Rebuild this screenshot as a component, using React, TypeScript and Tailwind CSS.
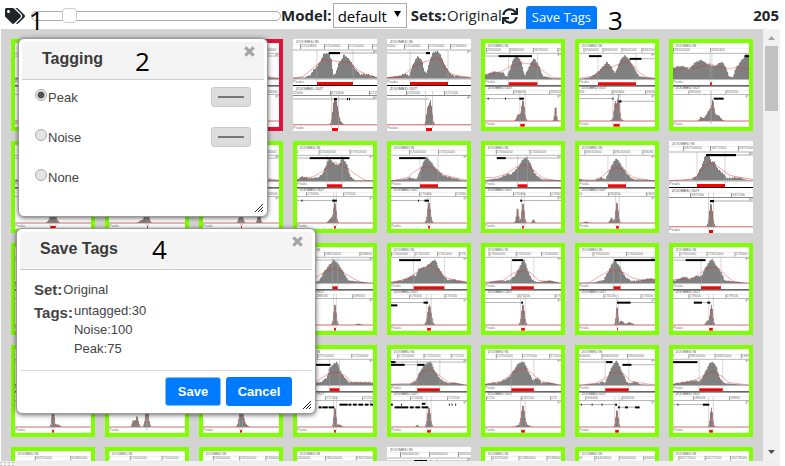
import React from "react";
import { FaSync, FaTags } from "react-icons/fa";

type Pt = [number, number];
type Box = [number, number, number];

interface Plot {
  border?: "none" | "red";
  area: Pt[];
  fit: Pt[];
  bar: Pt;
  genes?: Box[];
  lines?: Box[];
  peaks: Box[];
  bar2: Pt;
  marks: [number, string][];
  marks2: [number, string][];
}

const base: Plot = {
  area: [[0, 1], [20, 3], [30, 10], [38, 24], [43, 27], [50, 17], [58, 4], [70, 2], [84, 1]],
  fit: [[0, 1], [22, 5], [34, 14], [42, 17], [52, 13], [64, 4], [84, 1]],
  bar: [34, 50],
  genes: [],
  lines: [[0, 84, 14]],
  peaks: [[42, 24, 1.6]],
  bar2: [41, 43],
  marks: [[24, "170370000"], [60, "170380000"]],
  marks2: [[28, "170350k"], [66, "170400k"]],
};

const plots: Plot[] = [
  base,
  base,
  { ...base, border: "red" },
  {
    ...base,
    border: "none",
    area: [[0, 1], [12, 1], [17, 4], [22, 11], [25, 14], [29, 21], [31, 26], [36, 26], [39, 18], [40, 3], [43, 7], [46, 17], [49, 20], [51, 25], [55, 21], [58, 18], [61, 12], [67, 5], [74, 5], [84, 1]],
    fit: [[0, 0], [10, 2], [22, 12], [30, 19], [37, 18], [55, 16], [60, 13], [67, 7], [74, 4], [84, 1]],
    bar: [24, 60],
    genes: [[36, 47, 14], [41, 44, 60], [54, 55, 60], [56, 57, 60]],
    lines: [[47, 84, 14], [0, 84, 60]],
    peaks: [[41, 20, 1.5], [43.5, 17, 1.6], [46, 5, 2]],
    bar2: [39, 45],
    marks: [[7, "2210800"], [31, "2210900"], [55, "2211000"], [79, "2212"]],
    marks2: [[-2, "2200k"], [37, "22100k"], [76, "2220k"]],
  },
  {
    ...base,
    border: "none",
    area: [[0, 1], [13, 3], [18, 6], [22, 3], [25, 12], [28, 19], [31, 23], [35, 19], [37, 9], [40, 6], [42, 17], [45, 24], [46, 27], [50, 28], [53, 26], [56, 18], [61, 9], [65, 4], [73, 2], [84, 1]],
    fit: [[0, 1], [16, 2], [25, 11], [36, 16], [42, 18], [49, 21], [55, 17], [60, 8], [65, 4], [84, 1]],
    bar: [23, 61],
    genes: [[39, 43, 14]],
    lines: [[0, 40, 14], [0, 42, 60]],
    peaks: [[40.5, 14, 1.2], [43.5, 24, 1.5]],
    bar2: [39, 45],
    marks: [[-8, "2200000"], [17, "2210000"], [41, "2220000"], [63, "2230000"]],
    marks2: [[19, "22050k"], [57, "22150k"]],
  },
  {
    ...base,
    area: [[0, 5], [9, 9], [20, 8], [24, 3], [28, 13], [32, 24], [36, 27], [40, 20], [44, 4], [47, 11], [52, 21], [54, 24], [59, 17], [64, 4], [74, 1], [84, 1]],
    fit: [[0, 5], [18, 8], [29, 15], [40, 18], [55, 16], [63, 10], [74, 2], [84, 1]],
    bar: [26, 58],
    genes: [[15, 52, 14], [3, 4, 61], [22, 23, 61], [38, 43, 61]],
    lines: [[0, 15, 14], [0, 43, 61]],
    peaks: [[42, 24, 1.6], [37, 8, 1.6], [78, 17, 1]],
    bar2: [39, 44],
    marks: [[1, "2650000"], [27, "2660000"], [53, "2670000"], [80, "26"]],
    marks2: [[31, "26600k"], [71, "26650k"]],
  },
  {
    ...base,
    area: [[0, 0], [12, 2], [20, 8], [25, 13], [31, 20], [36, 14], [40, 7], [43, 15], [47, 24], [51, 27], [56, 22], [61, 13], [67, 3], [84, 1]],
    fit: [[0, 1], [18, 4], [25, 11], [31, 14], [36, 13], [45, 17], [53, 19], [60, 15], [67, 7], [75, 2], [84, 1]],
    bar: [21, 63],
    genes: [[11, 25, 14], [56, 69, 17], [37, 38, 61], [44, 47, 64]],
    lines: [[69, 84, 17], [0, 38, 61], [47, 84, 64]],
    peaks: [[40, 17, 1.2], [43.5, 24, 1.2], [42, 6, 3]],
    bar2: [38, 45],
    marks: [[5, "3340000"], [26, "3340500"], [47, "3341000"], [69, "3341500"]],
    marks2: [[-6, "3335k"], [36, "33400k"], [73, "3345k"]],
  },
  {
    ...base,
    area: [[0, 13], [5, 15], [11, 15], [18, 12], [24, 19], [31, 22], [39, 17], [46, 15], [54, 20], [58, 15], [62, 3], [66, 2], [69, 12], [76, 22], [81, 27], [84, 25]],
    fit: [[0, 9], [15, 13], [25, 12], [40, 17], [50, 14], [60, 11], [70, 13], [80, 11], [84, 12]],
    bar: [41, 43],
    genes: [[79, 84, 14], [45, 56, 61]],
    lines: [],
    peaks: [[42, 14, 4.5], [44, 12, 1], [31, 4, 1.5], [51, 4, 2]],
    bar2: [42, 42],
    marks: [[0, "33502000"], [41, "3350300"]],
    marks2: [[17, "33500k"], [58, "33550k"]],
  },
  { ...base, peaks: [[42, 20, 2.5]], bar2: [39, 45] },
  { ...base, peaks: [[42, 22, 1.6], [38, 4, 3]], bar2: [42, 43] },
  { ...base, peaks: [[42, 22, 1.5], [62, 16, 1.2]], bar2: [42, 43] },
  {
    ...base,
    area: [[0, 2], [5, 6], [14, 4], [24, 5], [29, 10], [33, 21], [36, 27], [40, 21], [46, 18], [50, 27], [55, 20], [59, 6], [64, 1], [84, 1]],
    fit: [[0, 1], [18, 5], [30, 12], [42, 21], [53, 16], [64, 8], [75, 1], [84, 0]],
    bar: [33, 50],
    genes: [[14, 58, 14], [5, 6, 61], [39, 44, 61]],
    lines: [[0, 14, 14], [0, 44, 61]],
    peaks: [[42, 23, 1.4], [38, 6, 2.2]],
    marks: [[-6, "000"], [24, "17000000"], [58, "17050000"]],
    marks2: [[10, "17000k"], [51, "17050k"]],
  },
  {
    ...base,
    area: [[0, 1], [14, 2], [21, 5], [28, 2], [32, 12], [36, 22], [39, 28], [45, 21], [50, 14], [58, 7], [69, 4], [78, 1], [84, 1]],
    fit: [[0, 0], [18, 4], [25, 10], [34, 15], [43, 16], [52, 12], [58, 7], [70, 4], [84, 1]],
    bar: [32, 52],
    genes: [[9, 38, 14], [30, 31, 61], [37, 42, 61]],
    lines: [[0, 42, 61]],
    marks: [[20, "17040000"], [52, "17050000"]],
    marks2: [[31, "17040k"], [71, "17060"]],
  },
  {
    ...base,
    area: [[0, 1], [13, 3], [26, 9], [29, 8], [37, 17], [42, 25], [46, 27], [50, 21], [55, 9], [63, 2], [84, 1]],
    fit: [[0, 4], [10, 4], [24, 8], [35, 16], [44, 18], [53, 13], [63, 4], [75, 1], [84, 0]],
    bar: [36, 47],
    genes: [[13, 23, 14], [39, 41, 61]],
    lines: [[23, 84, 14], [39, 84, 61]],
    peaks: [[36, 17, 1.2], [42, 23, 1.4], [53.5, 4, 1]],
    marks: [[12, "17040000"], [49, "17060000"]],
    marks2: [[31, "17040k"], [72, "17060"]],
  },
  {
    ...base,
    area: [[0, 3], [4, 1], [18, 1], [24, 5], [29, 2], [34, 13], [38, 22], [42, 26], [47, 18], [53, 9], [60, 2], [84, 1]],
    fit: [[0, 2], [15, 1], [24, 4], [32, 11], [42, 15], [51, 12], [60, 4], [84, 0]],
    bar: [32, 52],
    lines: [],
    peaks: [[36, 6, 1.5], [42, 24, 1.4], [8, 1, 2]],
    bar2: [41, 44],
    marks: [[6, "18010000"], [38, "18020000"], [70, "18030"]],
    marks2: [[-6, "800k"], [32, "18020k"], [74, "1803"]],
  },
  {
    ...base,
    border: "none",
    area: [[0, 0], [23, 1], [28, 6], [33, 16], [36, 25], [39, 27], [43, 19], [45, 20], [49, 12], [54, 8], [58, 3], [68, 4], [76, 1], [84, 0]],
    fit: [[0, 0], [20, 1], [28, 4], [36, 15], [43, 18], [53, 11], [61, 5], [84, 1]],
    bar: [28, 56],
    genes: [[37, 67, 14], [41, 45, 60]],
    lines: [[67, 84, 14], [45, 84, 60]],
    peaks: [[42, 24, 1.6]],
    bar2: [40, 44],
    marks: [[14, "18710000"], [41, "1871500"], [69, "1872000"]],
    marks2: [[21, "18700k"], [62, "18720k"]],
  },
  base,
  base,
  base,
  {
    ...base,
    area: [[0, 1], [24, 2], [29, 12], [35, 20], [41, 27], [47, 20], [53, 10], [57, 3], [84, 0]],
    fit: [[0, 0], [12, 2], [22, 7], [33, 14], [42, 16], [51, 12], [62, 5], [71, 1], [84, 0]],
    bar: [39, 45],
    peaks: [[42, 24, 1.4], [68, 1, 2]],
    marks: [[30, "18870000"], [69, "188800"]],
    marks2: [[20, "18850k"], [61, "18900k"]],
  },
  {
    ...base,
    area: [[0, 1], [10, 3], [19, 7], [25, 10], [27, 8], [31, 17], [39, 19], [43, 23], [49, 27], [52, 19], [58, 9], [63, 4], [69, 5], [84, 1]],
    fit: [[0, 1], [20, 5], [32, 15], [43, 20], [52, 13], [61, 6], [75, 2], [84, 1]],
    bar: [25, 59],
    genes: [[9, 33, 14], [36, 41, 61], [0, 7, 64]],
    lines: [[0, 40, 61]],
    peaks: [[42.5, 23, 2]],
    bar2: [40, 44],
    marks: [[0, "17600000"], [26, "1760500"], [51, "1761000"], [75, "176"]],
    marks2: [[20, "17600k"], [59, "17650k"]],
  },
  {
    ...base,
    area: [[0, 0], [9, 2], [27, 4], [33, 9], [39, 20], [43, 28], [47, 16], [51, 6], [57, 1], [72, 3], [84, 0]],
    fit: [[0, 1], [20, 3], [31, 11], [44, 14], [50, 12], [59, 3], [84, 0]],
    bar: [29, 54],
    genes: [[30, 42, 14], [40, 42, 61]],
    lines: [[0, 42, 61]],
    bar2: [40, 44],
    marks: [[4, "17600000"], [34, "1762000"], [62, "17630000"]],
    marks2: [[36, "17620k"], [77, "176"]],
  },
  {
    ...base,
    area: [[0, 0], [18, 1], [27, 4], [32, 13], [37, 23], [40, 26], [45, 19], [51, 8], [58, 3], [67, 4], [78, 6], [84, 5]],
    fit: [[0, 0], [12, 1], [23, 8], [32, 13], [42, 14], [51, 11], [58, 6], [70, 3], [84, 4]],
    bar: [38, 46],
    genes: [[39, 84, 14], [42, 57, 61]],
    lines: [[57, 84, 61]],
    peaks: [[42, 22, 1], [47, 5, 2], [56, 3, 2.5]],
    bar2: [42, 43],
    marks: [[15, "17600000"], [52, "17640000"]],
    marks2: [[27, "17620k"], [68, "17650k"]],
  },
  {
    ...base,
    area: [[0, 3], [13, 8], [19, 5], [26, 9], [31, 8], [37, 20], [43, 28], [48, 20], [54, 12], [57, 3], [67, 2], [84, 0]],
    fit: [[0, 4], [15, 4], [26, 7], [35, 15], [43, 18], [52, 15], [59, 8], [68, 1], [84, 0]],
    bar: [31, 53],
    genes: [[14, 36, 14], [23, 32, 61], [38, 41, 61]],
    lines: [[0, 14, 14], [23, 42, 61]],
    peaks: [[42.5, 23, 1.4], [38, 5, 1.5]],
    bar2: [40, 44],
    marks: [[7, "17810000"], [37, "17820000"], [68, "178300"]],
    marks2: [[17, "17800k"], [58, "17850k"]],
  },
  { ...base, peaks: [[42, 22, 1.2], [47, 3, 2]], bar2: [41, 43] },
  { ...base, peaks: [[27, 8, 1.2], [31, 12, 1.5], [42, 23, 1.6]], bar2: [42, 42] },
  { ...base, peaks: [[42, 23, 1.8], [45, 6, 2.5]], bar2: [41, 43] },
  {
    ...base,
    area: [[0, 2], [25, 3], [33, 9], [36, 20], [44, 27], [49, 14], [57, 4], [66, 4], [80, 4], [84, 3]],
    fit: [[0, 1], [20, 3], [29, 9], [36, 13], [46, 14], [55, 9], [60, 3], [84, 2]],
    bar: [36, 47],
    genes: [[0, 37, 17], [24, 27, 64], [28, 34, 64], [35, 41, 64], [47, 56, 61], [57, 60, 61], [62, 66, 61], [68, 73, 61], [75, 79, 61], [81, 84, 61]],
    lines: [[24, 42, 64], [47, 84, 61]],
    peaks: [[42, 23, 1.2], [47, 3, 1.5]],
    marks: [[22, "17210000"], [60, "17220000"]],
    marks2: [[31, "17210k"], [72, "17250"]],
  },
  {
    ...base,
    area: [[0, 1], [21, 1], [28, 6], [32, 16], [38, 24], [44, 27], [48, 17], [54, 8], [63, 2], [69, 3], [84, 0]],
    fit: [[0, 1], [22, 2], [30, 8], [36, 15], [43, 18], [52, 12], [63, 3], [84, 0]],
    bar: [29, 54],
    genes: [[0, 5, 14], [0, 15, 17], [29, 37, 17], [0, 2, 61], [11, 12, 61], [34, 38, 60], [64, 65, 61], [67, 68, 61], [71, 72, 61], [4, 19, 64], [21, 25, 64], [27, 32, 64], [34, 41, 64]],
    lines: [[0, 84, 14], [0, 38, 17], [4, 42, 64]],
    peaks: [[42, 23, 1.6], [29, 2, 1]],
    bar2: [40, 44],
    marks: [[7, "17220000"], [36, "17220500"], [66, "172210"]],
    marks2: [[21, "17200k"], [62, "17250k"]],
  },
  {
    ...base,
    area: [[0, 1], [16, 4], [26, 9], [31, 16], [37, 25], [43, 27], [48, 16], [53, 6], [58, 9], [63, 3], [71, 3], [84, 0]],
    fit: [[0, 1], [18, 4], [31, 14], [42, 19], [48, 17], [55, 10], [63, 4], [84, 0]],
    bar: [29, 54],
    lines: [],
    peaks: [[42, 20, 1.6], [42, 5, 4]],
    bar2: [40, 44],
    marks: [[12, "17210000"], [41, "1721500"], [71, "172200"]],
    marks2: [[1, "171k"], [40, "17210k"], [72, "172"]],
  },
  {
    ...base,
    area: [[0, 0], [20, 2], [26, 5], [29, 3], [34, 16], [38, 24], [42, 28], [47, 17], [53, 4], [57, 2], [62, 5], [67, 1], [84, 0]],
    fit: [[0, 0], [18, 2], [29, 8], [37, 14], [43, 15], [51, 11], [58, 4], [84, 0]],
    bar: [29, 55],
    genes: [[30, 37, 14], [48, 58, 17], [2, 3, 61], [14, 15, 61], [25, 26, 61], [40, 42, 61], [43, 45, 64], [51, 54, 64], [62, 67, 64]],
    lines: [[0, 37, 14], [58, 84, 17], [0, 42, 61], [43, 67, 64]],
    peaks: [[42, 20, 1.3]],
    bar2: [40, 44],
    marks: [[-4, "8400000"], [25, "18450000"], [53, "18500000"]],
    marks2: [[7, "18440k"], [47, "18450k"]],
  },
  {
    ...base,
    area: [[0, 1], [10, 4], [24, 6], [30, 5], [35, 14], [40, 24], [43, 27], [48, 22], [51, 10], [57, 2], [84, 0]],
    fit: [[0, 1], [15, 3], [30, 8], [43, 15], [54, 10], [61, 3], [84, 0]],
    bar: [29, 55],
    genes: [[0, 27, 14], [5, 6, 61], [33, 40, 61]],
    lines: [[0, 40, 61]],
    peaks: [[42.5, 22, 1.3]],
    bar2: [40, 44],
    marks: [[-4, "00"], [17, "18810000"], [46, "18820000"], [75, "1883"]],
    marks2: [[22, "18820k"], [62, "18850"]],
  },
  { ...base, marks: [[22, "16370000"], [61, "16380000"]] },
  { ...base, marks: [[-6, "000"], [23, "17010000"], [58, "17020000"]] },
  { ...base, marks: [[11, "13540000"], [40, "13550000"], [69, "13560000"]] },
  { ...base, marks: [[-2, "1560000"], [31, "18020000"], [65, "18070000"]] },
  { ...base, border: "none", marks: [[13, "18430000"], [42, "18440000"], [71, "1845000"]], genes: [[27, 40, 14]] },
  { ...base, marks: [[7, "15370000"], [37, "15380000"], [68, "15390000"]] },
  { ...base, marks: [[-4, "000"], [17, "16404000"], [44, "16404500"], [71, "164050"]] },
  { ...base, marks: [[6, "16277000"], [35, "16277500"], [63, "16278000"]] },
];

function heightAt(points: Pt[], x: number) {
  for (let i = 1; i < points.length; i++) {
    const [x0, y0] = points[i - 1];
    const [x1, y1] = points[i];
    if (x <= x1) return y0 + ((y1 - y0) * (x - x0)) / (x1 - x0);
  }
  return points[points.length - 1][1];
}

function zoomedOut(peaks: Box[], x: number) {
  return peaks.reduce((h, [c, top, w]) => h + top * Math.exp(-((x - c) ** 2) / (2 * w * w)), 0.5);
}

function steps(height: (x: number) => number, floor: number, rough: number) {
  let d = `M0 ${floor}`;
  for (let x = 0; x < 84; x++) {
    const h = height(x + 0.5);
    const jitter = h > 3 ? ((x * 7) % 5) * rough : 0;
    const y = (floor - Math.max(0.5, h - jitter)).toFixed(1);
    d += `L${x} ${y}L${x + 1} ${y}`;
  }
  return `${d}L84 ${floor}Z`;
}

function trace(height: (x: number) => number, floor: number) {
  let d = "";
  for (let x = 0; x <= 84; x++) d += `${x ? "L" : "M"}${x} ${(floor - height(x)).toFixed(1)}`;
  return d;
}

function Thumbnail({ plot }: { plot: Plot }) {
  const plain = plot.border === "none";
  const upper = (x: number) => heightAt(plot.area, x);
  const lower = (x: number) => zoomedOut(plot.peaks, x);
  const [b0, b1] = plot.bar;
  const [c0, c1] = plot.bar2;
  return (
    <svg viewBox="0 0 84 92" className="block h-full w-full" fontFamily="'Liberation Sans', Arial, sans-serif" fontSize="4" fill="#777">
      <rect width="84" height="92" fill="#fff" />
      <text x="3" y="4" fill="#555">ZOOMED IN</text>
      <text x="3" y="50.8" fill="#333">ZOOMED OUT</text>
      <path d="M0 5.5H84M0 52H84" stroke="#ddd" strokeWidth=".5" />
      {plot.marks.map(([x, label], i) => (
        <g key={i}>
          <path d={`M${x + 0.5} 5V10`} stroke="#777" strokeWidth=".8" />
          <text x={x + 1} y="8.2">{label}</text>
        </g>
      ))}
      {plot.marks2.map(([x, label], i) => (
        <g key={i}>
          <path d={`M${x + 0.5} 52V56`} stroke="#777" strokeWidth=".8" />
          <text x={x + 1} y="55">{label}</text>
        </g>
      ))}
      <path d="M0 11H84" stroke="#aaa" strokeWidth=".9" />
      <path d="M0 56.5H84" stroke={plain ? "#777" : "#aaa"} strokeWidth=".9" />
      <path d="M80 12H84M81 12V14M80 58H84M81 58V60" stroke="#888" strokeWidth=".7" />
      <path d={steps(upper, 39.5, 0.35)} fill="#808080" />
      <path d={steps(lower, 86, 0.25)} fill="#808080" />
      <path d={`M${b0} 11V43M${b1} 11V43M${c0 - 0.5} 52V89M${c1 + 0.5} 52V89`} stroke="#aaa" strokeOpacity=".7" strokeWidth=".7" />
      {plot.lines?.map(([a, b, y], i) => (
        <path key={i} d={`M${a} ${y}H${b}`} stroke="#888" strokeWidth=".7" />
      ))}
      {plot.genes?.map(([a, b, y], i) => (
        <rect key={i} x={a} y={y - 1} width={b - a} height="2.2" fill="#000" />
      ))}
      <path d={trace((x) => heightAt(plot.fit, x), 39.5)} fill="none" stroke="#f02020" strokeOpacity=".75" strokeWidth=".6" />
      <path d={trace((x) => lower(x) * 0.8, 86)} fill="none" stroke="#f02020" strokeOpacity=".5" strokeWidth=".6" />
      <path d="M0 40H84" stroke="#999" strokeWidth=".8" />
      <path d="M0 86.3H84" stroke="#f09090" strokeWidth=".5" />
      <text x="0" y="43.7">Peaks</text>
      <text x="0" y="90">Peaks</text>
      <rect x="0" y="46" width="84" height={plain ? 1 : 1.8} fill={plain ? "#000" : "#666"} />
      <rect x={b0} y="43" width={b1 - b0} height="3" fill="#f00" />
      <rect x={c0} y="89" width={c1 - c0} height="3" fill="#f00" />
    </svg>
  );
}

function Grip() {
  return (
    <svg viewBox="0 0 8 8" className="absolute right-1 bottom-1 size-2" stroke="#222" strokeWidth="1">
      <path d="M0 8L8 0M3 8L8 3M6 8L8 6" />
    </svg>
  );
}

function Dialog({ title, className, children }: { title: string; className: string; children: React.ReactNode }) {
  return (
    <section
      role="dialog"
      aria-label={title}
      className={`absolute rounded-md border border-[#999] bg-white p-[3px] font-['Liberation_Sans',Arial,sans-serif] text-[13px] leading-[19px] text-[#444] shadow-[0_1px_5px_rgba(0,0,0,0.6)] ${className}`}
    >
      <header className="flex h-[38px] items-start justify-between rounded-t border-b border-[#ccc] bg-[#f4f4f4] pl-5">
        <h2 className="pt-[7px] text-[16px] font-bold text-[#3a3a3a]">{title}</h2>
        <button type="button" aria-label="Close" className="p-[9px] pt-1">
          <svg viewBox="0 0 11 11" className="size-[11px]" stroke="#a5a5a5" strokeWidth="3.2">
            <path d="M1.3 1.3L9.7 9.7M9.7 1.3L1.3 9.7" />
          </svg>
        </button>
      </header>
      {children}
      <Grip />
    </section>
  );
}

function Note({ children, className }: { children: string; className: string }) {
  return <span className={`pointer-events-none absolute text-[26px] leading-[26px] text-black ${className}`}>{children}</span>;
}

const tags = [
  { name: "Peak", swatch: true },
  { name: "Noise", swatch: true },
  { name: "None", swatch: false },
];

export default function App() {
  return (
    <div className="relative flex h-screen flex-col overflow-hidden bg-white font-['Open_Sans','Noto_Sans',sans-serif] text-[15px] text-[#212529]">
      <header className="flex h-[29px] shrink-0 items-center pt-[2px] pl-[5px]">
        <FaTags size={20} aria-hidden="true" />
        <input
          type="range"
          aria-label="Image size"
          defaultValue={13}
          className="ml-[6px] h-[10px] w-[250px] appearance-none rounded-full border border-[#aaa] bg-white [&::-webkit-slider-thumb]:size-[15px] [&::-webkit-slider-thumb]:appearance-none [&::-webkit-slider-thumb]:rounded [&::-webkit-slider-thumb]:border [&::-webkit-slider-thumb]:border-[#ccc] [&::-webkit-slider-thumb]:bg-white"
        />
        <label htmlFor="model" className="pr-px font-bold">Model:</label>
        <span className="relative">
          <select id="model" className="block h-[25px] w-[74px] appearance-none border border-[#a9a9a9] bg-white pl-1 leading-[22px] text-black">
            <option>default</option>
          </select>
          <svg viewBox="0 0 7 6" className="pointer-events-none absolute top-2 right-[6px] h-[6px] w-[7px]">
            <path d="M0 0H7L3.5 6Z" />
          </svg>
        </span>
        <span className="ml-1 pr-px font-bold">Sets:</span>
        <span>Original</span>
        <button type="button" aria-label="Refresh">
          <FaSync size={16} />
        </button>
        <button type="button" className="ml-2 h-[23px] self-end rounded-t-[3px] bg-[#007bff] px-[6px] text-[13px] leading-[23px] text-white">
          Save Tags
        </button>
        <span className="mr-[6px] ml-auto font-bold">205</span>
      </header>

      <main className="flex min-h-0 flex-1 pr-[5px] pl-px">
        <div className="flex min-w-0 flex-1 flex-wrap content-start gap-[10px] overflow-hidden bg-[#d3d3d3] pt-[10px] pl-[10px]">
          {plots.map((plot, i) => (
            <div
              key={i}
              className={`h-[92px] w-[84px] ${
                plot.border === "none" ? "" : plot.border === "red" ? "border-4 border-[#dc143c]" : "border-4 border-[#80ff00]"
              }`}
            >
              <Thumbnail plot={plot} />
            </div>
          ))}
        </div>
        <div className="flex w-[17px] shrink-0 flex-col items-center bg-[#f1f1f1]">
          <svg viewBox="0 0 17 17" className="size-[17px]"><path d="M5 11L8.5 7L12 11Z" fill="#a3a3a3" /></svg>
          <div className="h-[65px] w-[13px] bg-[#c1c1c1]" />
          <svg viewBox="0 0 17 17" className="mt-auto size-[17px]"><path d="M5 6L8.5 10L12 6Z" fill="#505050" /></svg>
        </div>
      </main>
      <footer className="mr-[5px] h-[5px] shrink-0 bg-[#eee]">
        <svg viewBox="0 0 14 5" className="h-[5px] w-[14px]">
          <path d="M0 1.5H14M0 4.5H14" stroke="#bbb" strokeDasharray="2 2" />
        </svg>
      </footer>

      <Dialog title="Tagging" className="top-[38px] left-[18px] h-[179px] w-[250px]">
        <div className="flex flex-col gap-5 px-[13px] pt-[7px]">
          {tags.map((tag, i) => (
            <div key={tag.name} className="flex h-5 items-center justify-between">
              <label className="flex items-center gap-px">
                <input
                  type="radio"
                  name="tag"
                  defaultChecked={i === 0}
                  className="mb-1 size-3 appearance-none rounded-full border border-[#aaa] bg-[#e4e4e4] checked:bg-[radial-gradient(circle,#555_3px,#eee_4px)]"
                />
                {tag.name}
              </label>
              {tag.swatch && (
                <button type="button" aria-label={`${tag.name} colour`} className="flex h-5 w-10 items-center rounded-[3px] border border-[#ccc] bg-[#ddd] px-[6px]">
                  <span className="h-[2px] w-full bg-[#777]" />
                </button>
              )}
            </div>
          ))}
        </div>
      </Dialog>

      <Dialog title="Save Tags" className="top-[228px] left-4 h-[186px] w-[300px]">
        <dl className="grid h-[100px] grid-cols-[auto_1fr] content-start gap-x-px px-[14px] pt-[10px]">
          <div className="col-span-2 mb-[2px] flex items-center gap-px">
            <dt className="text-[15px] font-bold">Set:</dt>
            <dd>Original</dd>
          </div>
          <dt className="pt-[2px] text-[15px] font-bold">Tags:</dt>
          <dd>
            <ul>
              <li>untagged:30</li>
              <li>Noise:100</li>
              <li>Peak:75</li>
            </ul>
          </dd>
        </dl>
        <div className="flex justify-end gap-[5px] border-t border-[#ddd] pt-[6px] pr-5 font-bold text-white">
          <button type="button" className="h-[29px] w-14 rounded-[3px] border border-[#80bdff] bg-[#007bff]">Save</button>
          <button type="button" className="h-[29px] w-[66px] rounded-[3px] bg-[#007bff]">Cancel</button>
        </div>
      </Dialog>

      <Note className="top-[7px] left-[29px]">1</Note>
      <Note className="top-[48px] left-[135px]">2</Note>
      <Note className="top-[7px] left-[608px]">3</Note>
      <Note className="top-[236px] left-[152px]">4</Note>
    </div>
  );
}
